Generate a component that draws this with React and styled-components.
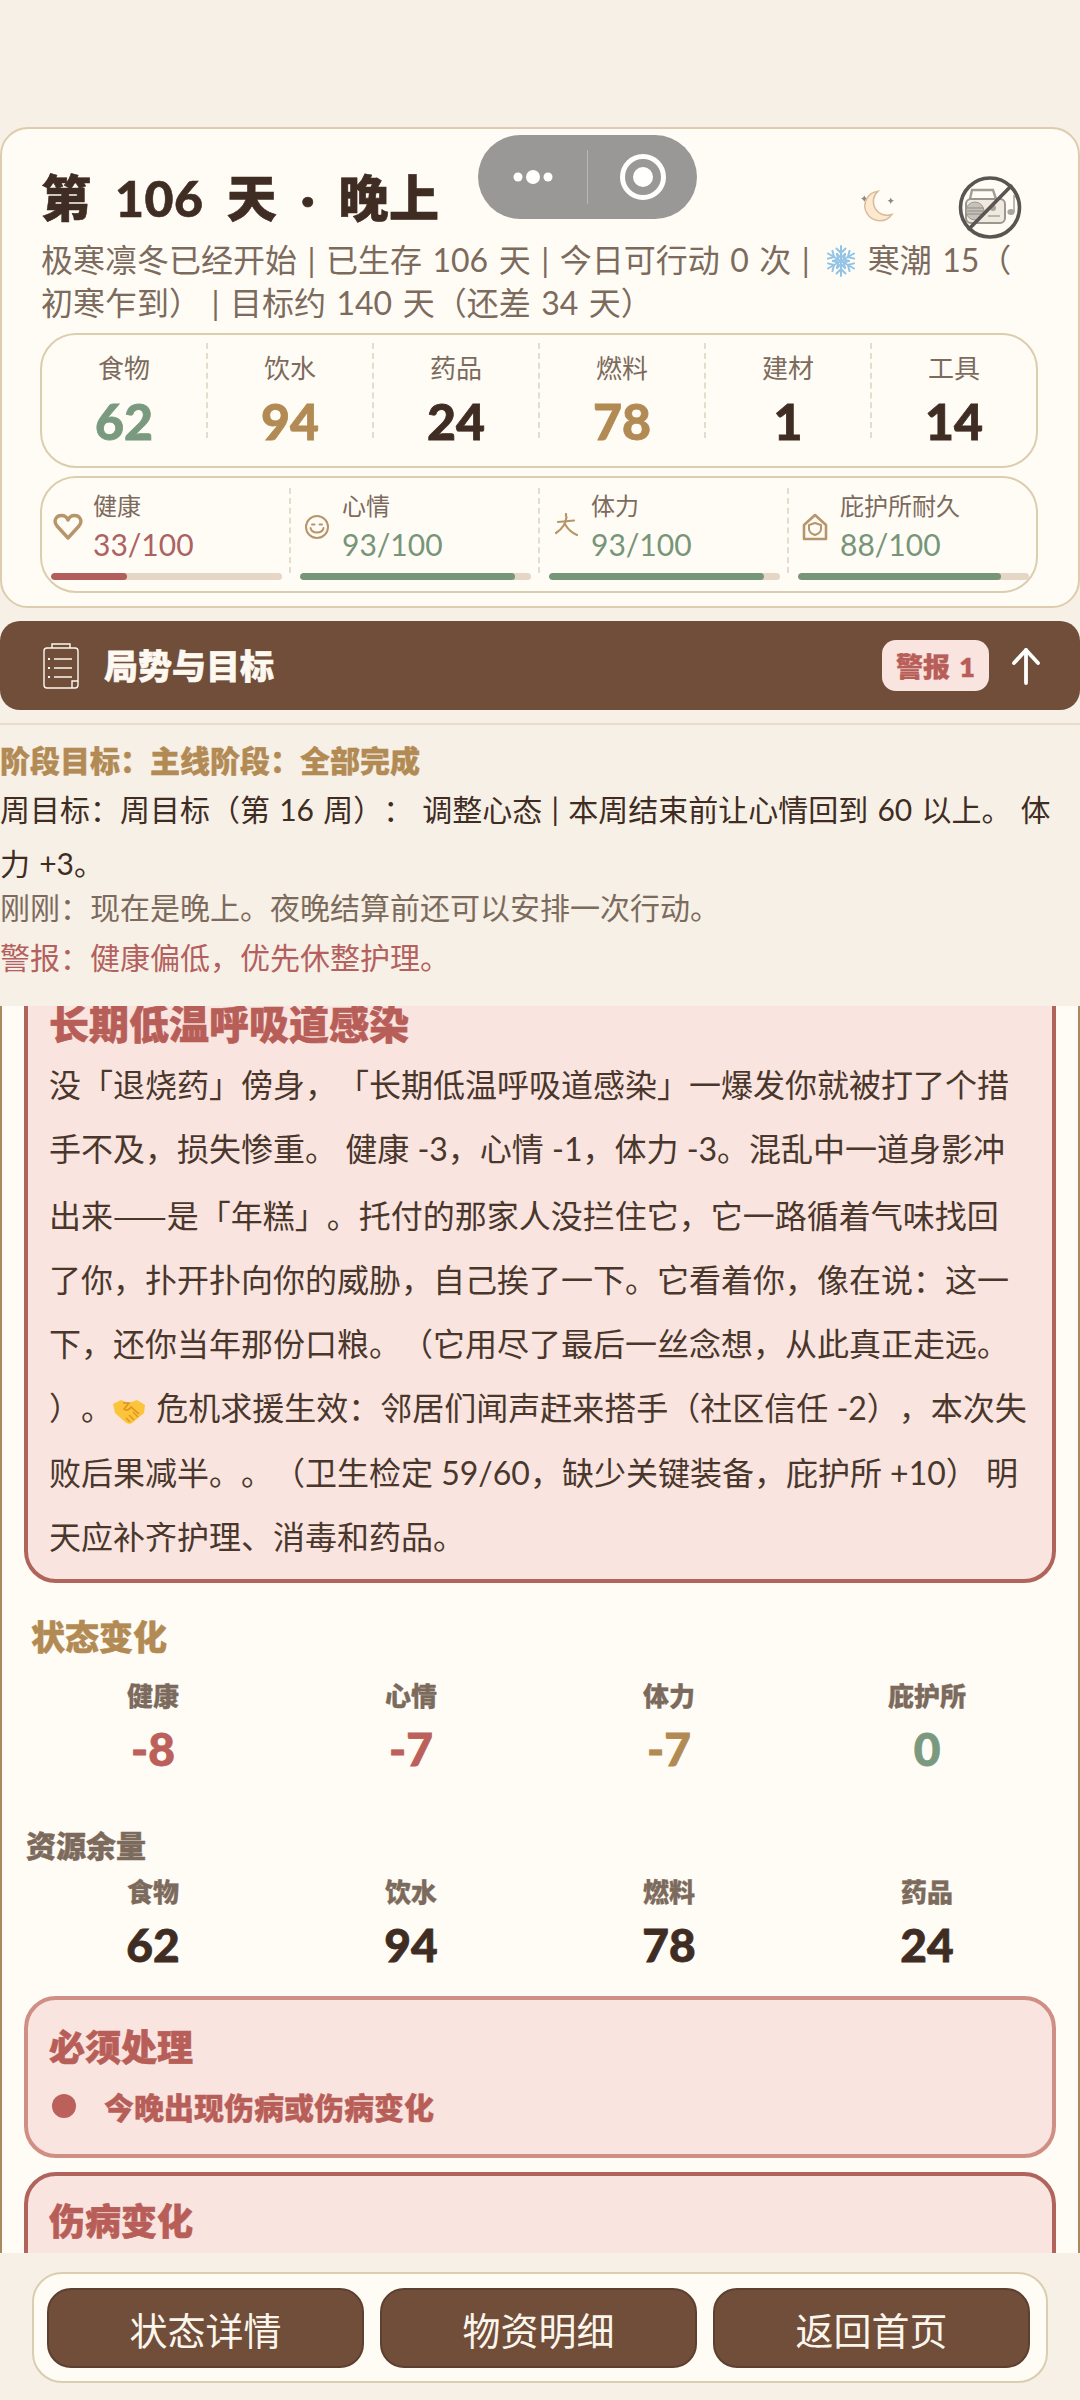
import React from "react";
import styled, { createGlobalStyle } from "styled-components";

const GlobalStyle = createGlobalStyle`
  html, body {
    margin: 0;
    padding: 0;
    background: #f7f0e6;
  }
  * {
    box-sizing: border-box;
    text-spacing-trim: space-all;
  }
`;

const Page = styled.div`
  position: relative;
  display: flex;
  flex-direction: column;
  width: 1080px;
  height: 2400px;
  overflow: hidden;
  background: #f7f0e6;
  color: #3f2d24;
  font-family: Lato, "Noto Sans CJK SC", sans-serif;
`;

const Capsule = styled.div`
  position: absolute;
  left: 478px;
  top: 135px;
  display: flex;
  align-items: center;
  width: 219px;
  height: 84px;
  border-radius: 42px;
  background: #999896;
`;

const CapsuleSide = styled.div`
  display: flex;
  align-items: center;
  justify-content: center;
  flex: 1;
  height: 54px;
  & + & {
    border-left: 1px solid rgba(255, 255, 255, 0.3);
  }
`;

const HeroCard = styled.section`
  flex: none;
  margin-top: 127px;
  height: 481px;
  padding: 39px 40px 13px 38px;
  border: 2px solid #dfcbae;
  border-radius: 28px;
  background: #fffcf5;
`;

const TitleRow = styled.div`
  display: flex;
  align-items: flex-start;
  height: 60px;
  padding-left: 1px;
`;

const Title = styled.h1`
  flex: 1;
  margin: 0;
  font-size: 50px;
  line-height: 60px;
  font-weight: 900;
  letter-spacing: 0.5px;
  word-spacing: 11px;
  white-space: pre;
  -webkit-text-stroke: 0.6px currentColor;
`;

const Moon = styled.svg`
  margin: 20px 63px 0 0;
`;

const Radio = styled.svg`
  margin: 8px 16px 0 0;
`;

const Subtitle = styled.p`
  margin: 10px 0 9px;
  padding-left: 1px;
  font-size: 32px;
  line-height: 43px;
  word-spacing: 2.3px;
  color: #7c6b5d;
  white-space: nowrap;
`;

const Snow = styled.svg`
  display: inline-block;
  margin: 0 0 0 5px;
  vertical-align: -6px;
`;

const ResourceBox = styled.div`
  display: flex;
  align-items: flex-start;
  height: 135px;
  padding-top: 8px;
  border: 2px solid #dbcdb0;
  border-radius: 36px;
`;

const ResourceCell = styled.div`
  flex: 1;
  height: 95px;
  padding-top: 7px;
  text-align: center;
  border-right: 2px dashed #e4dccc;
  &:last-child {
    border-right: 0;
  }
`;

const ResourceLabel = styled.div`
  font-size: 26px;
  line-height: 36px;
  color: #7c6b5d;
`;

const ResourceValue = styled.div`
  margin-top: 10px;
  font-size: 50px;
  line-height: 50px;
  font-weight: 900;
  color: ${(p) => p.$color || "#3f2d24"};
  -webkit-text-stroke: 0.8px currentColor;
`;

const StatBox = styled.div`
  display: flex;
  align-items: flex-start;
  height: 117px;
  margin-top: 8px;
  padding-top: 10px;
  border: 2px solid #dbcdb0;
  border-radius: 36px;
`;

const StatCell = styled.div`
  flex: 1;
  height: 85px;
  padding: 2px 7px 0 9px;
  border-right: 2px dashed #e4dccc;
  &:last-child {
    border-right: 0;
  }
`;

const StatTop = styled.div`
  display: flex;
  align-items: center;
  height: 73px;
`;

const StatIconSlot = styled.div`
  display: flex;
  flex: none;
  justify-content: center;
  width: 42px;
  padding: 0 9px 0 0;
  margin-top: ${(p) => p.$drop || 0}px;
`;

const StatLabel = styled.div`
  font-size: 24px;
  line-height: 32px;
  color: #7c6b5d;
`;

const StatValue = styled.div`
  margin-top: 3px;
  font-size: 30px;
  line-height: 38px;
  font-weight: 400;
  color: ${(p) => p.$color};
`;

const Track = styled.div`
  height: 7px;
  margin-top: 10px;
  border-radius: 4px;
  overflow: hidden;
  background: #e6d6c5;
`;

const Fill = styled.div`
  height: 100%;
  border-radius: 4px;
  background: ${(p) => p.$color};
`;

const HeaderBar = styled.div`
  flex: none;
  display: flex;
  align-items: center;
  height: 89px;
  margin-top: 13px;
  padding: 0 39px 0 43px;
  border-radius: 20px;
  background: #704e3a;
  color: #fdf8f0;
`;

const HeaderTitle = styled.div`
  flex: 1;
  margin: 0 0 2px 25px;
  font-size: 34px;
  font-weight: 900;
  -webkit-text-stroke: 0.6px currentColor;
`;

const AlertBadge = styled.div`
  display: flex;
  align-items: center;
  justify-content: center;
  width: 107px;
  height: 51px;
  margin-right: 22px;
  border-radius: 14px;
  background: #f9e4df;
  color: #b85e58;
  font-size: 27px;
  font-weight: 800;
  word-spacing: 3px;
  -webkit-text-stroke: 0.4px currentColor;
`;

const GoalBlock = styled.div`
  flex: none;
  height: 283px;
  margin-top: 13px;
  padding-top: 13px;
  border-top: 2px solid #e8dccd;
  white-space: nowrap;
`;

const GoalStage = styled.div`
  font-size: 30px;
  line-height: 44px;
  font-weight: 800;
  color: #b28a54;
  -webkit-text-stroke: 0.4px currentColor;
`;

const GoalWeek = styled.div`
  font-size: 30px;
  line-height: 54px;
  word-spacing: 1.5px;
`;

const GoalNote = styled.div`
  margin-top: ${(p) => p.$gap}px;
  font-size: 30px;
  line-height: 40px;
  color: ${(p) => p.$color};
`;

const ScrollArea = styled.div`
  flex: none;
  height: 1247px;
  padding: 0 22px;
  overflow: hidden;
  background: #fffcf5;
  border-left: 2px solid #a98a5e;
  border-right: 2px solid #a98a5e;
`;

const AlertCard = styled.div`
  margin-top: ${(p) => p.$top}px;
  padding: ${(p) => p.$pad};
  border: 4px solid ${(p) => p.$border};
  border-radius: 32px;
  background: #f9e4df;
  white-space: nowrap;
`;

const AlertHeading = styled.h2`
  margin: 0;
  font-size: ${(p) => p.$size}px;
  line-height: ${(p) => p.$line}px;
  font-weight: 900;
  color: #b85e58;
  -webkit-text-stroke: 0.6px currentColor;
`;

const StoryText = styled.div`
  margin-top: 2px;
`;

const StoryLine = styled.div`
  font-size: 32px;
  line-height: 64.3px;
  color: #4a372c;
`;

const WideDash = styled.span`
  font-family: "Noto Sans CJK SC", sans-serif;
`;

const Hands = styled.svg`
  display: inline-block;
  margin-right: 3px;
  vertical-align: -5px;
`;

const SectionTitle = styled.h3`
  margin: ${(p) => p.$top}px 0 0 ${(p) => p.$left}px;
  font-size: ${(p) => p.$size}px;
  line-height: ${(p) => p.$line}px;
  font-weight: 900;
  color: ${(p) => p.$color};
  -webkit-text-stroke: 0.5px currentColor;
`;

const FourGrid = styled.div`
  display: grid;
  grid-template-columns: repeat(4, 1fr);
  margin-top: ${(p) => p.$top}px;
  text-align: center;
`;

const GridLabel = styled.div`
  font-size: 26px;
  line-height: 36px;
  font-weight: 800;
  color: #7c6b5d;
  -webkit-text-stroke: 0.3px currentColor;
`;

const GridValue = styled.div`
  margin-top: 7px;
  font-size: 46px;
  line-height: 56px;
  font-weight: 900;
  color: ${(p) => p.$color || "#3f2d24"};
  -webkit-text-stroke: 0.8px currentColor;
`;

const BulletRow = styled.div`
  display: flex;
  align-items: center;
  height: 44px;
  margin-top: 13px;
  font-size: 30px;
  font-weight: 800;
  color: #b85e58;
  -webkit-text-stroke: 0.4px currentColor;
`;

const Dot = styled.span`
  width: 24px;
  height: 24px;
  margin: 0 28px 0 3px;
  border-radius: 50%;
  background: #bb605a;
`;

const BottomBar = styled.div`
  flex: none;
  height: 146px;
  padding: 19px 32px 0;
`;

const BottomPanel = styled.div`
  display: flex;
  gap: 16px;
  height: 111px;
  padding: 14px 16px 14px 13px;
  border: 2px solid #dbcdb0;
  border-radius: 30px;
  background: #fffcf5;
`;

const ActionButton = styled.button`
  flex: 1;
  height: 80px;
  padding: 0;
  border: 2px solid #5e4030;
  border-radius: 24px;
  background: #704e3a;
  color: #fbf5ec;
  font-family: inherit;
  font-size: 38px;
`;

const resources = [
  { label: "食物", value: 62, color: "#7a9a80" },
  { label: "饮水", value: 94, color: "#b28a54" },
  { label: "药品", value: 24 },
  { label: "燃料", value: 78, color: "#b28a54" },
  { label: "建材", value: 1 },
  { label: "工具", value: 14 },
];

const RED = "#b15f5c";
const GREEN = "#779579";

function HeartIcon() {
  return (
    <svg width="30" height="28" viewBox="0 0 30 28" fill="none" stroke="#b6956a" strokeWidth="3.4" strokeLinejoin="round">
      <path d="M15 25 L4 13 C0 8 3 2.5 8.5 2.5 C11.5 2.5 14 4.5 15 7 C16 4.5 18.5 2.5 21.5 2.5 C27 2.5 30 8 26 13 Z" />
    </svg>
  );
}

function SmileIcon() {
  return (
    <svg width="26" height="26" viewBox="0 0 26 26" fill="none" stroke="#b6956a" strokeWidth="2" strokeLinecap="round">
      <circle cx="13" cy="13" r="11" />
      <path d="M8 10.5 h2.5 M15.5 10.5 h2.5" />
      <path d="M6.5 14 C8 20 18 20 19.5 14" />
    </svg>
  );
}

function FigureIcon() {
  return (
    <svg width="24" height="24" viewBox="0 0 24 24" fill="none" stroke="#b6956a" strokeWidth="2.2" strokeLinecap="round">
      <path d="M12 1 v2" />
      <path d="M4 9 L20 7.5" />
      <path d="M12.5 4 C12 11 8 16 2 20" />
      <path d="M11.5 12 C14 16 18 20 23 22" />
    </svg>
  );
}

function ShelterIcon() {
  return (
    <svg width="26" height="28" viewBox="0 0 26 28" fill="none" stroke="#b6956a" strokeWidth="2.6" strokeLinejoin="round">
      <path d="M13 2 L24 12 V26 H2 V12 Z" />
      <path d="M13 10 L19 12 V16 C19 19 16 21 13 22 C10 21 7 19 7 16 V12 Z" strokeWidth="2" />
    </svg>
  );
}

const stats = [
  { label: "健康", value: 33, color: "#ad6262", bar: RED, icon: <HeartIcon />, drop: 0 },
  { label: "心情", value: 93, color: GREEN, bar: GREEN, icon: <SmileIcon />, drop: 0 },
  { label: "体力", value: 93, color: GREEN, bar: GREEN, icon: <FigureIcon />, drop: -4 },
  { label: "庇护所耐久", value: 88, color: GREEN, bar: GREEN, icon: <ShelterIcon />, drop: 1 },
];

const changes = [
  { label: "健康", value: "-8", color: "#bb605a" },
  { label: "心情", value: "-7", color: "#bb605a" },
  { label: "体力", value: "-7", color: "#b28a54" },
  { label: "庇护所", value: "0", color: "#7a9a80" },
];

const remains = [
  { label: "食物", value: 62 },
  { label: "饮水", value: 94 },
  { label: "燃料", value: 78 },
  { label: "药品", value: 24 },
];

function SnowIcon() {
  const arms = [0, 60, 120, 180, 240, 300];
  return (
    <Snow width="32" height="34" viewBox="0 0 32 32" fill="none" stroke="#93c4e6" strokeWidth="2" strokeLinecap="round">
      {arms.map((a) => (
        <g key={a} transform={`rotate(${a} 16 16)`}>
          <path d="M16 16 V1" />
          <path d="M11.5 3.5 L16 8 L20.5 3.5" />
          <path d="M12 9 L16 13 L20 9" />
        </g>
      ))}
    </Snow>
  );
}

function HandshakeIcon() {
  return (
    <Hands width="32" height="30" viewBox="0 0 32 30">
      <path d="M0 9 L8 5 L16 8 L24 5 L32 10 L31 18 L19 28 C16 30 13 28 11 26 L2 18 Z" fill="#fbc43a" />
      <path d="M10 8 L16 8 L11 14 C13 16 16 15 18 12 L26 19" fill="none" stroke="#dd9420" strokeWidth="1.6" />
      <path d="M17 27 L13 23 M21 25 L16 20 M25 22 L20 17" stroke="#dd9420" strokeWidth="1.4" />
    </Hands>
  );
}

function App() {
  return (
    <Page>
      <GlobalStyle />
      <HeroCard>
        <TitleRow>
          <Title>第 106 天 · 晚上</Title>
          <Moon width="36" height="36" viewBox="0 0 34 34">
            <path d="M4 9 l1 -2 l1 2 l2 1 l-2 1 l-1 2 l-1 -2 l-2 -1 Z" fill="#8f8578" />
            <path d="M29 11 l1 -2 l1 2 l2 1 l-2 1 l-1 2 l-1 -2 l-2 -1 Z" fill="#8f8578" />
            <path d="M18 3 A14 14 0 1 0 31 25 A13 13 0 0 1 18 3 Z" fill="#fde8d0" stroke="#d9bd9b" strokeWidth="1.4" />
          </Moon>
          <Radio width="64" height="64" viewBox="8 10 64 64">
            <path d="M20 33 L22 24 H43 L46 33" fill="none" stroke="#a09c96" strokeWidth="2.4" />
            <rect x="16" y="33" width="39" height="24" rx="5" fill="#efe9e0" stroke="#9b9790" strokeWidth="2" />
            <circle cx="25" cy="45" r="9" fill="#c6c2ba" stroke="#9b9790" />
            <path d="M17 42 H33 M17 45 H33 M17 48 H33" stroke="#8f8b85" strokeWidth="1" />
            <circle cx="43" cy="42" r="3" fill="#a8a49e" />
            <path d="M38 50 H50" stroke="#a8a49e" strokeWidth="1.5" />
            <ellipse cx="61" cy="46" rx="3.6" ry="3" fill="#a8a49e" />
            <path d="M64 46 V30 C66 31 68 33 68 36" fill="none" stroke="#a8a49e" strokeWidth="1.5" />
            <circle cx="40" cy="41.5" r="29.5" fill="none" stroke="#5a5552" strokeWidth="3.6" />
            <path d="M62 19 L18 64" stroke="#5a5552" strokeWidth="3.6" />
          </Radio>
        </TitleRow>
        <Subtitle>
          极寒凛冬已经开始 | 已生存 106 天 | 今日可行动 0 次 | <SnowIcon /> 寒潮 15（
          <br />
          初寒乍到） | 目标约 140 天（还差 34 天）
        </Subtitle>
        <ResourceBox>
          {resources.map((r) => (
            <ResourceCell key={r.label}>
              <ResourceLabel>{r.label}</ResourceLabel>
              <ResourceValue $color={r.color}>{r.value}</ResourceValue>
            </ResourceCell>
          ))}
        </ResourceBox>
        <StatBox>
          {stats.map((s) => (
            <StatCell key={s.label}>
              <StatTop>
                <StatIconSlot $drop={s.drop}>{s.icon}</StatIconSlot>
                <div>
                  <StatLabel>{s.label}</StatLabel>
                  <StatValue $color={s.color}>{s.value}/100</StatValue>
                </div>
              </StatTop>
              <Track>
                <Fill $color={s.bar} style={{ width: `${s.value}%` }} />
              </Track>
            </StatCell>
          ))}
        </StatBox>
      </HeroCard>

      <HeaderBar>
        <svg width="36" height="47" viewBox="0 0 36 47" fill="none" stroke="#fdf8f0" strokeWidth="1.4">
          <rect x="1" y="6" width="34" height="40" rx="3" />
          <path d="M9 6 V2 H27 V6" />
          <path d="M11 17 H29 M11 26 H29 M11 35 H29" />
          <path d="M5 17 H7 M5 26 H7 M5 35 H7" strokeWidth="2" />
          <path d="M29 46 V39 H35" />
        </svg>
        <HeaderTitle>局势与目标</HeaderTitle>
        <AlertBadge>警报 1</AlertBadge>
        <svg width="30" height="38" viewBox="0 0 30 38" fill="none" stroke="#fff" strokeWidth="3.8" strokeLinecap="round" strokeLinejoin="round">
          <path d="M15 36 V3" />
          <path d="M3 16 L15 3 L27 16" />
        </svg>
      </HeaderBar>

      <GoalBlock>
        <GoalStage>阶段目标：主线阶段：全部完成</GoalStage>
        <GoalWeek>
          周目标：周目标（第 16 周）： 调整心态 | 本周结束前让心情回到 60 以上。 体
          <br />
          力 +3。
        </GoalWeek>
        <GoalNote $gap={-3} $color="#7c6b5d">刚刚：现在是晚上。夜晚结算前还可以安排一次行动。</GoalNote>
        <GoalNote $gap={10} $color="#b4605e">警报：健康偏低，优先休整护理。</GoalNote>
      </GoalBlock>

      <ScrollArea>
        <AlertCard $top={-33} $pad="20px 21px 10px" $border="#b0645c">
          <AlertHeading $size={40} $line={54}>长期低温呼吸道感染</AlertHeading>
          <StoryText>
            <StoryLine>没「退烧药」傍身，「长期低温呼吸道感染」一爆发你就被打了个措</StoryLine>
            <StoryLine>手不及，损失惨重。 健康 -3，心情 -1，体力 -3。混乱中一道身影冲</StoryLine>
            <StoryLine>出来<WideDash>——</WideDash>是「年糕」。托付的那家人没拦住它，它一路循着气味找回</StoryLine>
            <StoryLine>了你，扑开扑向你的威胁，自己挨了一下。它看着你，像在说：这一</StoryLine>
            <StoryLine>下，还你当年那份口粮。（它用尽了最后一丝念想，从此真正走远。</StoryLine>
            <StoryLine>）。<HandshakeIcon /> 危机求援生效：邻居们闻声赶来搭手（社区信任 -2），本次失</StoryLine>
            <StoryLine>败后果减半。。（卫生检定 59/60，缺少关键装备，庇护所 +10） 明</StoryLine>
            <StoryLine>天应补齐护理、消毒和药品。</StoryLine>
          </StoryText>
        </AlertCard>

        <SectionTitle $top={32} $left={7} $size={34} $line={44} $color="#b28a54">状态变化</SectionTitle>
        <FourGrid $top={19}>
          {changes.map((c) => (
            <div key={c.label}>
              <GridLabel>{c.label}</GridLabel>
              <GridValue $color={c.color}>{c.value}</GridValue>
            </div>
          ))}
        </FourGrid>

        <SectionTitle $top={48} $left={2} $size={30} $line={40} $color="#7c6b5d">资源余量</SectionTitle>
        <FourGrid $top={9}>
          {remains.map((c) => (
            <div key={c.label}>
              <GridLabel>{c.label}</GridLabel>
              <GridValue>{c.value}</GridValue>
            </div>
          ))}
        </FourGrid>

        <AlertCard $top={23} $pad="23px 21px 26px" $border="#d08f85">
          <AlertHeading $size={36} $line={48}>必须处理</AlertHeading>
          <BulletRow>
            <Dot />
            今晚出现伤病或伤病变化
          </BulletRow>
        </AlertCard>

        <AlertCard $top={14} $pad="21px 21px 60px" $border="#b0645c">
          <AlertHeading $size={36} $line={48}>伤病变化</AlertHeading>
        </AlertCard>
      </ScrollArea>

      <BottomBar>
        <BottomPanel>
          <ActionButton>状态详情</ActionButton>
          <ActionButton>物资明细</ActionButton>
          <ActionButton>返回首页</ActionButton>
        </BottomPanel>
      </BottomBar>

      <Capsule>
        <CapsuleSide>
          <svg width="50" height="20" viewBox="0 0 50 20" fill="#fff">
            <circle cx="10" cy="10" r="4.5" />
            <circle cx="25" cy="10" r="7" />
            <circle cx="40" cy="10" r="4.5" />
          </svg>
        </CapsuleSide>
        <CapsuleSide>
          <svg width="48" height="48" viewBox="0 0 48 48" fill="none">
            <circle cx="24" cy="24" r="20.5" stroke="#fff" strokeWidth="5" />
            <circle cx="24" cy="24" r="10" fill="#fff" />
          </svg>
        </CapsuleSide>
      </Capsule>
    </Page>
  );
}

export default App;
